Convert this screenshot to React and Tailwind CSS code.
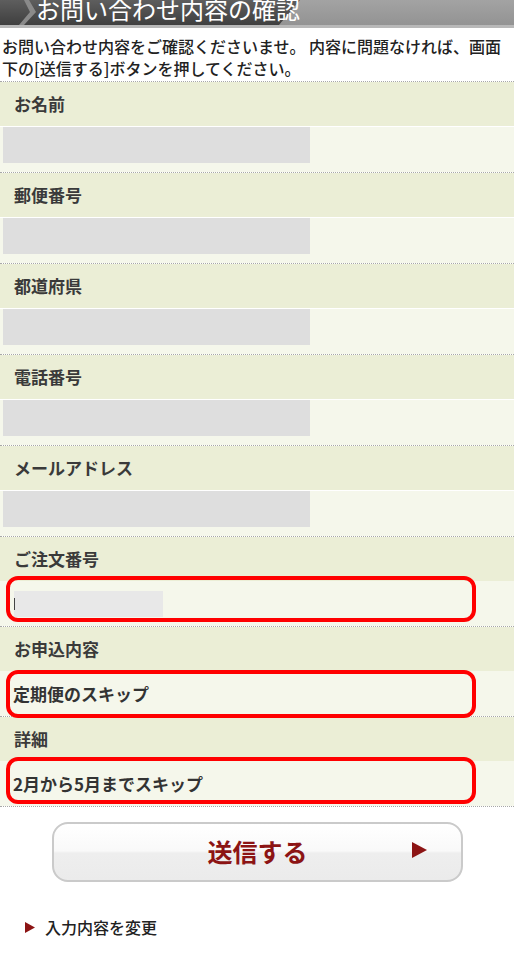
import { useState } from 'react'

const fields = [
  { label: 'お名前', kind: 'blank' },
  { label: '郵便番号', kind: 'blank' },
  { label: '都道府県', kind: 'blank' },
  { label: '電話番号', kind: 'blank' },
  { label: 'メールアドレス', kind: 'blank' },
  { label: 'ご注文番号', kind: 'order', mark: 'top-[-5px] h-[46px]' },
  { label: 'お申込内容', kind: 'text', value: '定期便のスキップ', mark: 'top-[-1px] h-[48px]' },
  { label: '詳細', kind: 'text', value: '2月から5月までスキップ', mark: 'top-[-4px] h-[47px]' },
]

function HeaderBar() {
  return (
    <div className="relative h-[28px] overflow-hidden bg-[#c2c2c2]">
      {/* decorative title plate */}
      <svg className="absolute inset-0" width="514" height="28" viewBox="0 0 514 28">
        <defs>
          <linearGradient id="dark" x1="0" y1="0" x2="0" y2="1">
            <stop offset="0" stopColor="#5e5e5e" />
            <stop offset="1" stopColor="#3f3f3f" />
          </linearGradient>
          <linearGradient id="light" x1="0" y1="0" x2="0" y2="1">
            <stop offset="0" stopColor="#a3a3a3" />
            <stop offset="1" stopColor="#939393" />
          </linearGradient>
        </defs>
        <rect x="0" y="0" width="514" height="25" fill="url(#light)" />
        <polygon points="0,0 300,0 279,25 0,25" fill="url(#dark)" />
        <polygon points="24,0 29,0 36,12 24,25 19,25 30,12" fill="#8a8a8a" />
        <rect x="0" y="25" width="514" height="3" fill="#b8b8b8" />
      </svg>
      <h1 className="relative -mt-[6px] pl-[36px] text-[24px] leading-[30px] text-white font-['Noto_Sans_CJK_JP',sans-serif]">
        お問い合わせ内容の確認
      </h1>
    </div>
  )
}

function FieldRow({ label, kind, value, mark }) {
  return (
    <div className="border-b border-dotted border-[#a8a8a8]">
      <div className="h-[44px] flex items-center pl-[14px] bg-[#ebeed6] text-[17px] font-bold text-[#3a3a3a]">
        {label}
      </div>
      <div className="relative h-[45px] bg-[#f5f7eb]">
        {kind === 'blank' && (
          <div className="ml-[3px] mt-[1px] w-[307px] h-[36px] bg-[#dedede]" />
        )}
        {kind === 'order' && (
          <div className="h-full flex items-center">
            <div className="ml-[14px] w-[149px] h-[26px] flex items-center bg-[#e8e8e8]">
              <span className="w-px h-[12px] bg-[#444]" />
            </div>
          </div>
        )}
        {kind === 'text' && (
          <div className="h-full flex items-center pl-[13px] text-[17px] font-bold text-[#333]">
            {value}
          </div>
        )}
        {mark && (
          <div className={`absolute left-[6px] w-[470px] rounded-[12px] border-[4px] border-[#ff0000] ${mark}`} />
        )}
      </div>
    </div>
  )
}

export default function App() {
  const [sent, setSent] = useState(false)
  return (
    <div className="w-[514px] min-h-[960px] bg-white font-['Noto_Sans_CJK_JP',sans-serif]">
      <HeaderBar />

      <p className="pl-[2px] pt-[7px] pb-[2px] text-[16px] leading-[22px] text-[#222] font-medium">
        お問い合わせ内容をご確認くださいませ。 内容に問題なければ、画面下の[送信する]ボタンを押してください。
      </p>

      <div className="border-t border-dotted border-[#a8a8a8]">
        {fields.map((f) => (
          <FieldRow key={f.label} {...f} />
        ))}
      </div>

      <div className="pt-[15px] pl-[52px]">
        <button
          onClick={() => setSent(true)}
          className="relative w-[411px] h-[60px] rounded-[16px] border-2 border-[#cacaca] bg-[linear-gradient(#ffffff_0%,#f9f9f9_48%,#eeeeee_52%,#ebebeb_100%)] flex items-center justify-center"
        >
          <span className="text-[25px] font-bold text-[#8c1414]">
            {sent ? '送信する' : '送信する'}
          </span>
          <svg className="absolute right-[34px] top-[18px]" width="15" height="16" viewBox="0 0 15 16">
            <polygon points="0,0 15,8 0,16" fill="#8c1414" />
          </svg>
        </button>
      </div>

      <div className="mt-[33px] pl-[25px] flex items-center gap-[10px]">
        <svg width="10" height="11" viewBox="0 0 10 11">
          <polygon points="0,0 10,5.5 0,11" fill="#8c1414" />
        </svg>
        <a href="#" className="text-[16px] font-medium text-[#222]">入力内容を変更</a>
      </div>
    </div>
  )
}
